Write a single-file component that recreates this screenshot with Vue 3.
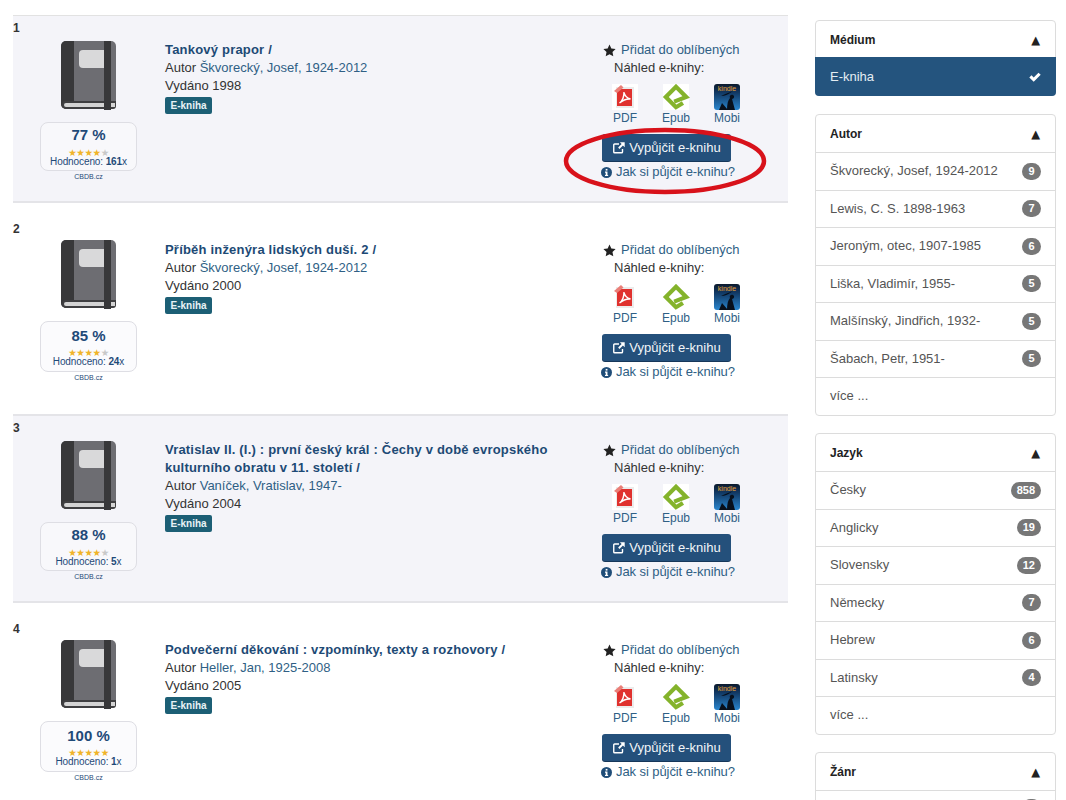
<script setup>
const rows = [
  { n: 1, title: 'Tankový prapor /', author: 'Škvorecký, Josef, 1924-2012', year: 1998, pct: 77, gold: 4, votes: 161, shaded: true, circled: true },
  { n: 2, title: 'Příběh inženýra lidských duší. 2 /', author: 'Škvorecký, Josef, 1924-2012', year: 2000, pct: 85, gold: 4, votes: 24, shaded: false },
  { n: 3, title: 'Vratislav II. (I.) : první český král : Čechy v době evropského kulturního obratu v 11. století /', author: 'Vaníček, Vratislav, 1947-', year: 2004, pct: 88, gold: 4, votes: 5, shaded: true },
  { n: 4, title: 'Podvečerní děkování : vzpomínky, texty a rozhovory /', author: 'Heller, Jan, 1925-2008', year: 2005, pct: 100, gold: 5, votes: 1, shaded: false },
]
const panels = [
  { name: 'Autor', items: [['Škvorecký, Josef, 1924-2012', 9], ['Lewis, C. S. 1898-1963', 7], ['Jeroným, otec, 1907-1985', 6], ['Liška, Vladimír, 1955-', 5], ['Malšínský, Jindřich, 1932-', 5], ['Šabach, Petr, 1951-', 5]], more: true },
  { name: 'Jazyk', items: [['Česky', 858], ['Anglicky', 19], ['Slovensky', 12], ['Německy', 7], ['Hebrew', 6], ['Latinsky', 4]], more: true },
  { name: 'Žánr', items: [['', '']], more: false },
]
</script>

<template>
  <div class="page">
    <main class="results">
      <article v-for="r in rows" :key="r.n" class="row" :class="{ shaded: r.shaded }">
        <div class="num">{{ r.n }}</div>
        <div class="body">
          <div class="left">
            <svg class="book" viewBox="0 0 55 69" width="55" height="69">
              <rect x="0" y="0" width="55" height="68" rx="5" fill="#6d6d72" />
              <path d="M5 0h8v68H5a5 5 0 0 1-5-5V5a5 5 0 0 1 5-5z" fill="#38383a" />
              <path d="M4 60h51v5a3 3 0 0 1-3 3H5a5 5 0 0 1-4-4 4 4 0 0 1 3-4z" fill="#3f3f41" />
              <path d="M5 62h49v4H5a2 2 0 0 1 0-4z" fill="#d4d4d4" />
              <path d="M22 9h21v18H22a4 4 0 0 1-4-4V13a4 4 0 0 1 4-4z" fill="#d9d9da" />
              <rect x="43" y="0" width="7" height="69" fill="#38383a" />
            </svg>
            <div class="rating">
              <div class="pct">{{ r.pct }} %</div>
              <div class="stars">
                <span v-for="s in 5" :key="s" class="st" :class="{ on: s <= r.gold }">★</span>
              </div>
              <div class="votes">Hodnoceno: <b>{{ r.votes }}</b>x</div>
            </div>
            <div class="src">CBDB.cz</div>
          </div>
          <div class="main">
            <a class="title">{{ r.title }}</a>
            <div>Autor <a class="link">{{ r.author }}</a></div>
            <div>Vydáno {{ r.year }}</div>
            <span class="tag">E-kniha</span>
          </div>
          <div class="actions">
            <div class="fav">
              <svg viewBox="0 0 24 24" width="13" height="13"><path d="M12 1l3.400 7.300 7.900 1-5.800 5.400 1.500 7.900L12 18.700l-7 3.900 1.500-7.900L.7 9.300l7.900-1z" fill="#222" /></svg>
              <a class="link">Přidat do oblíbených</a>
            </div>
            <div class="preview">Náhled e-knihy:</div>
            <div class="formats">
              <div class="fmt">
                <svg viewBox="0 0 26 26" width="26" height="26">
                  <rect width="26" height="26" fill="#fff" />
                  <path d="M4 3h18v21H4z" fill="#ececec" />
                  <path d="M5 5h15v17H5z" fill="#e0312e" />
                  <path d="M2 7L9 1l2.500 2.500L5 9z" fill="#ea7f78" />
                  <path d="M7.500 19c3.500-2.500 4.500-7.500 4.500-11 .5 3.500 3 6 6.500 7-4.500-.5-8 1.500-11 4z" fill="none" stroke="#fff" stroke-width="1.400" />
                </svg>
                <span>PDF</span>
              </div>
              <div class="fmt">
                <svg viewBox="0 0 28 28" width="28" height="26">
                  <rect width="28" height="28" fill="#fff" />
                  <path d="M21.500 20.500L14 25 3 14 14 3l11 11-13 5" fill="none" stroke="#84b32b" stroke-width="4.500" stroke-miterlimit="6" />
                </svg>
                <span>Epub</span>
              </div>
              <div class="fmt">
                <svg viewBox="0 0 26 26" width="26" height="26">
                  <defs>
                    <linearGradient id="kg" x1="0" y1="0" x2="0" y2="1">
                      <stop offset="0" stop-color="#0c1a2c" />
                      <stop offset="0.350" stop-color="#123a66" />
                      <stop offset="1" stop-color="#2a86cf" />
                    </linearGradient>
                  </defs>
                  <rect width="26" height="26" rx="3" fill="url(#kg)" />
                  <path d="M13 26c0-6 1-10 3-12-1-2 1-4 3-3s1 4-1 4l3 11zM5 26l3-7 6 7zM7 12c3-2 8-3 12-5-4 3-8 5-12 5z" fill="#08101c" />
                  <text x="13" y="7" text-anchor="middle" class="kindle">kindle</text>
                </svg>
                <span>Mobi</span>
              </div>
            </div>
            <button class="borrow">
              <svg viewBox="0 0 16 16" width="14" height="14"><path d="M12 9v3.500a1 1 0 0 1-1 1H3a1 1 0 0 1-1-1v-8a1 1 0 0 1 1-1h5" fill="none" stroke="#fff" stroke-width="1.600" /><path d="M9 1.500h5.500V7l-2-2-4 4-1.500-1.500 4-4z" fill="#fff" /></svg>
              Vypůjčit e-knihu
            </button>
            <div class="how">
              <svg viewBox="0 0 16 16" width="11" height="11"><circle cx="8" cy="8" r="8" fill="#1f4d78" /><rect x="6.800" y="2.800" width="2.600" height="2.400" fill="#fff" /><path d="M5.800 6.500h3.600v5h1v1.700H5.800v-1.700h1v-3.300h-1z" fill="#fff" /></svg>
              <a class="link tight">Jak si půjčit e-knihu?</a>
            </div>
            <svg v-if="r.circled" class="ring" viewBox="0 0 208 70" width="208" height="70">
              <ellipse cx="104" cy="35" rx="99" ry="31" fill="none" stroke="#d8121b" stroke-width="4.500" />
            </svg>
          </div>
        </div>
      </article>
    </main>

    <aside class="side">
      <section class="panel">
        <header class="phead">Médium <span class="tri">▲</span></header>
        <div class="active">
          E-kniha
          <svg viewBox="0 0 16 16" width="14" height="14"><path d="M1.500 8.500L4 6l2.500 2.500L12 3l2.500 2.500-8 8z" fill="#fff" /></svg>
        </div>
      </section>
      <section v-for="p in panels" :key="p.name" class="panel">
        <header class="phead">{{ p.name }} <span class="tri">▲</span></header>
        <div v-for="it in p.items" :key="it[0]" class="item">
          <span>{{ it[0] }}</span><span class="count">{{ it[1] }}</span>
        </div>
        <div v-if="p.more" class="item">více ...</div>
      </section>
    </aside>
  </div>
</template>

<style scoped>
.page {
  display: flex;
  align-items: flex-start;
  height: 800px;
  overflow: hidden;
  padding: 15px 10px 0 13px;
  box-sizing: border-box;
  font-family: "Liberation Sans", Arial, sans-serif;
  font-size: 13px;
  line-height: 18px;
  color: #333;
  background: #fff;
}
.results { width: 775px; flex: none; border-top: 1px solid #e2e2e2; }
.row { padding: 19px 0 0; border-bottom: 2px solid #e4e4e8; box-sizing: border-box; height: 213px; }
.row.shaded { background: #f4f4f9; padding: 5px 0 0; height: 187px; }
.row:last-child { border-bottom: none; }
.num { font-weight: 700; font-size: 12px; line-height: 14px; color: #333; }
.body { display: flex; align-items: flex-start; }
.left { width: 97px; margin: 4px 0 0 27px; display: flex; flex-direction: column; align-items: center; flex: none; }
.shaded .left { margin-top: 6px; }
.book { display: block; }
.rating { width: 97px; height: 51px; box-sizing: border-box; margin-top: 12px; border: 1px solid #dedee4; border-radius: 8px; background: #fbfbfd; text-align: center; padding-top: 5px; }
.shaded .rating { height: 49px; background: #f8f8fb; padding-top: 3px; }
.pct { font-size: 15px; line-height: 18px; font-weight: 700; color: #1f4a78; }
.stars { height: 8px; line-height: 9px; font-size: 9.500px; font-family: "DejaVu Sans", sans-serif; margin-top: 3px; letter-spacing: -0.400px; }
.shaded .stars { margin-top: 4px; }
.st { color: #c9c9c9; }
.st.on { color: #f0b429; }
.votes { font-size: 10px; line-height: 11px; color: #1f4a78; letter-spacing: -0.100px; }
.votes b { font-weight: 700; }
.src { font-size: 7px; line-height: 10px; margin-top: 1px; color: #1f4a78; }
.main { width: 410px; margin: 5px 0 0 28px; flex: none; }
.shaded .main { margin-top: 6px; }
.title { display: block; font-weight: 700; letter-spacing: 0.200px; color: #1d4a75; }
.link { color: #2f5f85; }
.link.tight { letter-spacing: -0.080px; }
.tag { display: block; width: max-content; margin-top: 2px; padding: 0 5.500px; height: 17px; line-height: 17px; font-size: 10px; font-weight: 700; color: #e8f2f5; background: #1c5f75; border-radius: 2px; }
.actions { position: relative; margin: 5px 0 0 28px; width: 170px; flex: none; }
.shaded .actions { margin-top: 6px; }
.fav { display: flex; align-items: center; gap: 5px; }
.preview { margin-left: 11px; }
.formats { display: flex; margin: 7px 0 0 -3px; }
.fmt { width: 52px; display: flex; flex-direction: column; align-items: center; color: #2f5f85; font-size: 12px; line-height: 14px; margin-left: -1px; }
.fmt svg { display: block; margin-bottom: 1px; }
.kindle { font-family: "Liberation Sans", Arial, sans-serif; font-size: 7px; fill: #e8a33a; }
.borrow { display: flex; align-items: center; justify-content: center; gap: 3px; width: 129px; height: 27px; margin: 9px 0 0 -1px; padding: 0; border: none; border-radius: 3px; background: #24507b; color: #f2f5f8; font-family: inherit; font-size: 13px; line-height: 18px; box-shadow: 0 1px 0 #16375a; }
.how { display: flex; align-items: center; gap: 4px; margin-top: 2px; margin-left: -2px; height: 18px; }
.ring { position: absolute; left: -42px; top: 85px; pointer-events: none; }
.side { width: 241px; margin-left: 27px; flex: none; padding-top: 5px; }
.panel { border: 1px solid #dcdcdc; border-radius: 4px; margin-bottom: 17.500px; background: #fff; }
.panel:first-child { margin-bottom: 18px; }
.phead { display: flex; justify-content: space-between; align-items: center; height: 37px; padding: 0 14px; font-size: 12px; font-weight: 700; color: #222; box-sizing: border-box; }
.tri { font-size: 11.500px; font-family: "DejaVu Sans", sans-serif; font-weight: 400; color: #222; margin-right: 1px; }
.active { display: flex; justify-content: space-between; align-items: center; height: 39px; padding: 0 14px 0 15px; background: #24547e; color: #e4edf3; margin: -1px -1px -1px; box-sizing: border-box; border-radius: 0 0 4px 4px; }
.item { display: flex; justify-content: space-between; align-items: center; height: 37.500px; padding: 0 14px; border-top: 1px solid #dcdcdc; color: #555; box-sizing: border-box; }
.count { background: #777; color: #fff; font-size: 11px; font-weight: 700; line-height: 17px; padding: 0 6px; min-width: 7px; text-align: center; border-radius: 9px; }
.count:empty { height: 17px; margin-top: -3px; }
</style>

<style>
html, body { margin: 0; overflow: hidden; background: #fff; }
</style>
